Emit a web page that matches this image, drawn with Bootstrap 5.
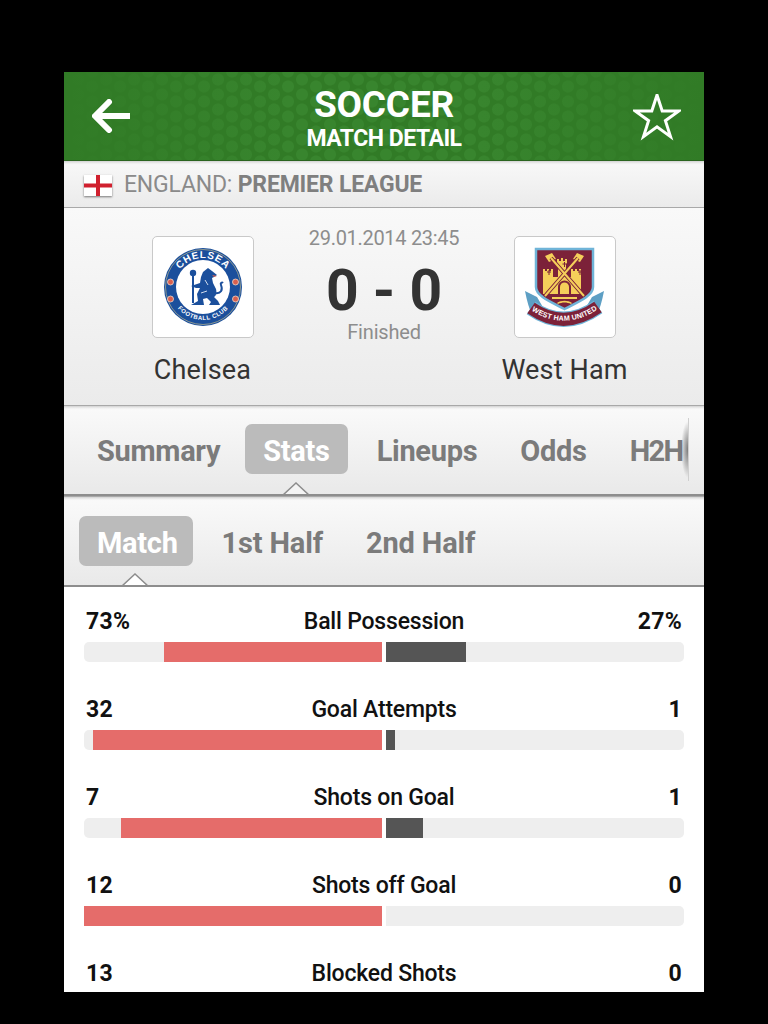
<!DOCTYPE html>
<html lang="en">
<head>
    <meta charset="UTF-8">
    <meta name="viewport" content="width=device-width, initial-scale=1.0">
    <title>Soccer - Match Detail</title>
    <link rel="stylesheet" href="https://cdn.jsdelivr.net/npm/bootstrap@5.3.0/dist/css/bootstrap.min.css">
    <style>
        html, body { height: 1024px; }
        body { background: #000; padding: 72px 64px 32px; overflow: hidden; font-family: Roboto, "Liberation Sans", sans-serif; }
        .app-frame { width: 640px; height: 920px; overflow: hidden; background: #fff; }

        .top-bar { display: grid; grid-template-columns: 1fr auto 1fr; height: 89px; padding: 0 23px; color: #fff; border-bottom: 1px solid #2a6420;
            background-color: #317b26;
            background-image:
                linear-gradient(to right, #317b26 0, rgba(49,123,38,0) 35%, rgba(49,123,38,0) 65%, #317b26 100%),
                radial-gradient(circle, #38852e 5.500px, transparent 6.500px),
                radial-gradient(circle, #38852e 5.500px, transparent 6.500px);
            background-size: 100% 100%, 28px 15px, 28px 15px;
            background-position: 0 0, 0 0, 14px 7px; }
        .top-title { font-size: 37px; line-height: 36px; font-weight: 700; letter-spacing: -.2px; margin-top: 15px; margin-bottom: 2px; }
        .top-sub { font-size: 23px; line-height: 27px; font-weight: 700; letter-spacing: -.5px; }
        .back-arrow { margin-left: 5px; }

        .league-bar { height: 47px; padding: 2px 20px 0; border-bottom: 1px solid #a9a9a9; color: #8a8a8a; font-size: 23px; letter-spacing: -.2px;
            background: linear-gradient(#f8f8f8, #ebebeb); box-shadow: inset 0 3px 3px -2px rgba(0,0,0,.2); }
        .league-bar b { font-weight: 700; color: #7f7f7f; }
        .flag-box { width: 28px; height: 21px; background: #fff; box-shadow: 0 1px 2px rgba(0,0,0,.5); margin-right: 12px; }

        .match-box { display: grid; grid-template-columns: 102px 1fr 102px; height: 197px; padding: 28px 88px 0; background: linear-gradient(#f9f9f9, #ebebeb); color: #333; }
        .crest-box { width: 102px; height: 102px; flex: none; background: #fff; border: 1px solid #c9c9c9; border-radius: 5px; }
        .team-name { font-size: 27px; line-height: 32px; margin-top: 16px; margin-left: -1px; white-space: nowrap; letter-spacing: .15px; }
        .match-date { font-size: 20px; line-height: 22px; color: #8d8d8d; letter-spacing: -.3px; margin-top: -9px; }
        .match-score { font-size: 57px; line-height: 52px; font-weight: 700; color: #333; margin-top: 16px; }
        .match-state { font-size: 20px; line-height: 24px; color: #8d8d8d; letter-spacing: -.2px; margin-top: 3px; }

        .tab-strip { position: relative; height: 91px; background: linear-gradient(#fafafa, #e9e9e9); border-top: 1px solid #a8a8a8; border-bottom: 2px solid #8d8d8d; padding: 18px 0 0 15px; gap: 7px; overflow: hidden; box-shadow: inset 0 3px 3px -2px rgba(0,0,0,.2); }
        .tab-sub { padding-top: 19px; }
        .tab-item { height: 50px; line-height: 54px; padding: 0 18px; font-size: 29px; font-weight: 700; color: #7b7b7b; letter-spacing: -.3px; border-radius: 7px; white-space: nowrap; }
        .tab-item.is-on { background: #bbb; color: #fff; margin-right: 4px; }
        .tab-sub .tab-item { letter-spacing: -.15px; }
        .tab-sub .tab-item.is-on { padding-right: 15px; letter-spacing: -.3px; }
        .tab-short { letter-spacing: -1.6px; }
        .tab-notch { position: absolute; bottom: -2px; width: 26px; height: 14px; }
        .tab-fade { position: absolute; top: 12px; right: 15px; width: 8px; height: 63px; border-right: 1px solid #cfcfcf;
            background: radial-gradient(ellipse 100% 45% at right, rgba(0,0,0,.5), rgba(0,0,0,0)); }

        .stat-list { padding: 20px 20px 0; }
        .stat-row { height: 88px; }
        .stat-head { display: grid; grid-template-columns: 1fr auto 1fr; padding: 0 2px; font-size: 23px; line-height: 30px; font-weight: 500; color: #111; letter-spacing: -.2px; margin-bottom: 5px; }
        .stat-val { font-weight: 700; letter-spacing: .3px; }
        .stat-bars { gap: 4px; }
        .stat-bars .progress { width: 298px; height: 20px; background: #eee; border-radius: 5px 0 0 5px; overflow: visible; }
        .stat-bars .progress + .progress { border-radius: 0 5px 5px 0; }
        .bar-home { background: #e56c6a; }
        .bar-away { background: #555; }
    </style>
</head>
<body>
    <div class="app-frame">
        <!-- header -->
        <div class="top-bar">
            <svg class="back-arrow align-self-center" width="38" height="34" viewBox="0 0 38 34"><path d="M17 3 3 17l14 14M4 17h33" fill="none" stroke="#fff" stroke-width="6" stroke-linecap="round" stroke-linejoin="round"/></svg>
            <div class="text-center">
                <div class="top-title">SOCCER</div>
                <div class="top-sub">MATCH DETAIL</div>
            </div>
            <svg class="align-self-center ms-auto mt-1" width="48" height="48" viewBox="0 0 48 48"><path d="M24 1 29.200 16.900H45.900L32.400 26.700 37.500 42.600 24 32.800 10.500 42.600 15.600 26.700 2.100 16.900H18.800Z" fill="none" stroke="#fff" stroke-width="3"/></svg>
        </div>

        <!-- league -->
        <div class="league-bar d-flex align-items-center">
            <svg class="flag-box" viewBox="0 0 28 21"><rect width="28" height="21" fill="#fff"/><path d="M12 0h4v21h-4zM0 8.500h28v4H0z" fill="#d0202e"/></svg>
            <span>ENGLAND: <b>PREMIER LEAGUE</b></span>
        </div>

        <!-- score -->
        <div class="match-box text-center">
            <div class="d-flex flex-column align-items-center">
                <div class="crest-box d-flex align-items-center justify-content-center">
                    <svg width="80" height="80" viewBox="0 0 80 80">
                        <defs>
                            <path id="arcTop" d="M11 40a29 29 0 0 1 58 0"/>
                            <path id="arcBot" d="M7 40a33 33 0 0 0 66 0"/>
                        </defs>
                        <circle cx="40" cy="40" r="39" fill="#1b4f9c"/>
                        <circle cx="40" cy="40" r="37.500" fill="none" stroke="#d9c98a" stroke-width=".6"/>
                        <circle cx="40" cy="40" r="27" fill="#fff"/>
                        <text font-family="Liberation Sans, sans-serif" font-size="10" font-weight="700" fill="#fff" letter-spacing=".8"><textPath href="#arcTop" startOffset="50%" text-anchor="middle">CHELSEA</textPath></text>
                        <text font-family="Liberation Sans, sans-serif" font-size="6" font-weight="700" fill="#fff" letter-spacing=".5"><textPath href="#arcBot" startOffset="50%" text-anchor="middle">FOOTBALL CLUB</textPath></text>
                        <g fill="#d9604f" stroke="#f3d9c8" stroke-width=".8">
                            <circle cx="7.500" cy="35" r="3"/><circle cx="72.500" cy="35" r="3"/>
                            <circle cx="7.500" cy="52" r="3"/><circle cx="72.500" cy="52" r="3"/>
                        </g>
                        <circle cx="30" cy="26" r="3.200" fill="#1b4f9c"/>
                        <path d="M30 29v27" stroke="#1b4f9c" stroke-width="2"/>
                        <path d="M40 25 45 21 49 24 54 28 51 30 49 31 50 36 53 42C54 46 53 49 51 50L55 54 57 58H46L48 55 44 51 40 52 41 58H28L35 54 34 47 37 41 33 41 28 39 37 36 38 30Z" fill="#1b4f9c"/>
                        <path d="M52 46C58 47 60 43 58 38 57 36 59 35 60 36" fill="none" stroke="#1b4f9c" stroke-width="2"/>
                        <path d="M49 28l5 1-3 1z" fill="#d9604f"/>
                        <path d="M42 33l3 5M38 46l6-2" stroke="#fff" stroke-width=".8" fill="none"/>
                    </svg>
                </div>
                <div class="team-name">Chelsea</div>
            </div>
            <div>
                <div class="match-date">29.01.2014 23:45</div>
                <div class="match-score">0 - 0</div>
                <div class="match-state">Finished</div>
            </div>
            <div class="d-flex flex-column align-items-center">
                <div class="crest-box d-flex align-items-center justify-content-center">
                    <svg width="82" height="80" viewBox="0 0 82 80">
                        <defs><path id="arcRibbon" d="M2 57Q40 87 79 56"/></defs>
                        <path d="M1 44 13 50 20 62 9 70C5 62 3 54 1 44ZM80 44 68 50 61 62 72 70C76 62 78 54 80 44Z" fill="#5d9fc4"/>
                        <path d="M12 2h57v38c0 9-15 15-28.500 22C27 55 12 49 12 40z" fill="#7c2239" stroke="#6fb4d8" stroke-width="2.500"/>
                        <g fill="#f5cf5a">
                            <path d="M19 22h2v2h2v-2h2v2h2v-2h2v8h5V17l-1-1v-4h2v2h2v-3h2v3h2v-2h2v4l-1 1v13h5v-8h2v2h2v-2h2v2h2v-2h2v25H19Z"/>
                            <path d="M28 52h25v-2H28zM33 56c4-3 11-3 15 0l-1 1c-4-2-9-2-13 0z"/>
                            <path d="M21 9 28 6 32 12 25 15z"/>
                            <path d="M60 9 53 6 49 12 56 15z"/>
                        </g>
                        <path d="M25 23v5M23 25h4M56 23v5M54 25h4M40.500 15v5M38.500 17h4" stroke="#7c2239" stroke-width="1"/>
                        <path d="M34 47v-7a6.500 6.500 0 0 1 13 0v7z" fill="#7c2239"/>
                        <path d="M36 47v-7a4.500 4.500 0 0 1 9 0v7z" fill="#f5cf5a"/>
                        <path d="M27 11 60 49M54 11 21 49" stroke="#7c2239" stroke-width="4"/>
                        <path d="M27 11 60 49M54 11 21 49" stroke="#f5cf5a" stroke-width="2"/>
                        <path d="M7 61Q40 84 74 60" fill="none" stroke="#6fb4d8" stroke-width="15"/>
                        <path d="M7 61Q40 84 74 60" fill="none" stroke="#7c2239" stroke-width="13"/>
                        <text font-family="Liberation Sans, sans-serif" font-size="7.200" font-weight="700" fill="#fff" dy="2"><textPath href="#arcRibbon" startOffset="50%" text-anchor="middle">WEST HAM UNITED</textPath></text>
                    </svg>
                </div>
                <div class="team-name">West Ham</div>
            </div>
        </div>

        <!-- main tabs -->
        <div class="tab-strip d-flex">
            <div class="tab-item">Summary</div>
            <div class="tab-item is-on">Stats</div>
            <div class="tab-item">Lineups</div>
            <div class="tab-item">Odds</div>
            <div class="tab-item tab-short">H2H</div>
            <div class="tab-fade"></div>
            <svg class="tab-notch" style="left:219px" viewBox="0 0 26 14"><path d="M0 14 13 1l13 13z" fill="#f4f4f4"/><path d="M0 13 13 1l13 12" fill="none" stroke="#8d8d8d" stroke-width="1.500"/></svg>
        </div>

        <!-- sub tabs -->
        <div class="tab-strip tab-sub d-flex">
            <div class="tab-item is-on">Match</div>
            <div class="tab-item">1st Half</div>
            <div class="tab-item">2nd Half</div>
            <svg class="tab-notch" style="left:58px" viewBox="0 0 26 14"><path d="M0 14 13 1l13 13z" fill="#fff"/><path d="M0 13 13 1l13 12" fill="none" stroke="#8d8d8d" stroke-width="1.500"/></svg>
        </div>

        <!-- stats -->
        <div class="stat-list">
            <div class="stat-row">
                <div class="stat-head"><span class="stat-val">73%</span><span>Ball Possession</span><span class="stat-val text-end">27%</span></div>
                <div class="stat-bars d-flex">
                    <div class="progress justify-content-end"><div class="progress-bar bar-home" style="width:73%"></div></div>
                    <div class="progress"><div class="progress-bar bar-away" style="width:27%"></div></div>
                </div>
            </div>
            <div class="stat-row">
                <div class="stat-head"><span class="stat-val">32</span><span>Goal Attempts</span><span class="stat-val text-end">1</span></div>
                <div class="stat-bars d-flex">
                    <div class="progress justify-content-end"><div class="progress-bar bar-home" style="width:97%"></div></div>
                    <div class="progress"><div class="progress-bar bar-away" style="width:3%"></div></div>
                </div>
            </div>
            <div class="stat-row">
                <div class="stat-head"><span class="stat-val">7</span><span>Shots on Goal</span><span class="stat-val text-end">1</span></div>
                <div class="stat-bars d-flex">
                    <div class="progress justify-content-end"><div class="progress-bar bar-home" style="width:87.500%"></div></div>
                    <div class="progress"><div class="progress-bar bar-away" style="width:12.500%"></div></div>
                </div>
            </div>
            <div class="stat-row">
                <div class="stat-head"><span class="stat-val">12</span><span>Shots off Goal</span><span class="stat-val text-end">0</span></div>
                <div class="stat-bars d-flex">
                    <div class="progress justify-content-end"><div class="progress-bar bar-home" style="width:100%"></div></div>
                    <div class="progress"><div class="progress-bar bar-away" style="width:0%"></div></div>
                </div>
            </div>
            <div class="stat-row">
                <div class="stat-head"><span class="stat-val">13</span><span>Blocked Shots</span><span class="stat-val text-end">0</span></div>
            </div>
        </div>
    </div>

    <script src="https://cdn.jsdelivr.net/npm/bootstrap@5.3.0/dist/js/bootstrap.bundle.min.js"></script>
</body>
</html>
